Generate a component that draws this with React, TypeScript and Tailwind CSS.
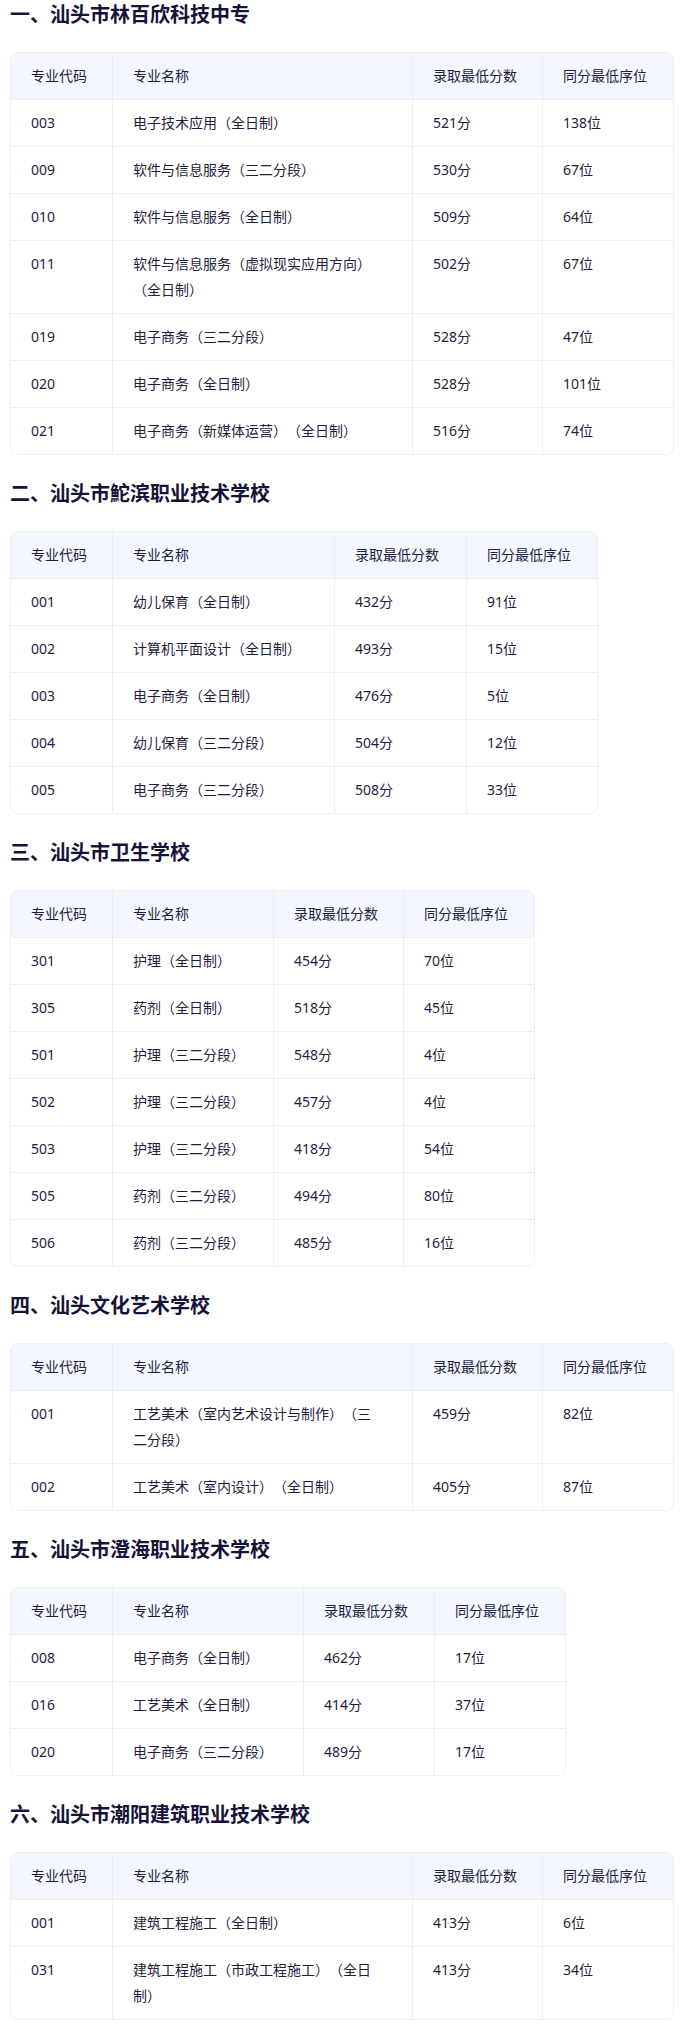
import React from "react";

type Row = [string, string, string, string];

interface Section {
  title: string;
  wrap: string;
  grid: string;
  c2: string;
  rows: Row[];
}

const HEAD: Row = ["专业代码", "专业名称", "录取最低分数", "同分最低序位"];

const sections: Section[] = [
  {
    title: "一、汕头市林百欣科技中专",
    wrap: "w-[664px]",
    grid: "grid grid-cols-[102px_300px_130px_130px]",
    c2: "pl-5 pr-[35px]",
    rows: [
      ["003", "电子技术应用（全日制）", "521分", "138位"],
      ["009", "软件与信息服务（三二分段）", "530分", "67位"],
      ["010", "软件与信息服务（全日制）", "509分", "64位"],
      ["011", "软件与信息服务（虚拟现实应用方向）（全日制）", "502分", "67位"],
      ["019", "电子商务（三二分段）", "528分", "47位"],
      ["020", "电子商务（全日制）", "528分", "101位"],
      ["021", "电子商务（新媒体运营）（全日制）", "516分", "74位"],
    ],
  },
  {
    title: "二、汕头市鮀滨职业技术学校",
    wrap: "w-[588px]",
    grid: "grid grid-cols-[102px_222px_132px_130px]",
    c2: "px-5",
    rows: [
      ["001", "幼儿保育（全日制）", "432分", "91位"],
      ["002", "计算机平面设计（全日制）", "493分", "15位"],
      ["003", "电子商务（全日制）", "476分", "5位"],
      ["004", "幼儿保育（三二分段）", "504分", "12位"],
      ["005", "电子商务（三二分段）", "508分", "33位"],
    ],
  },
  {
    title: "三、汕头市卫生学校",
    wrap: "w-[525px]",
    grid: "grid grid-cols-[102px_161px_130px_130px]",
    c2: "px-5",
    rows: [
      ["301", "护理（全日制）", "454分", "70位"],
      ["305", "药剂（全日制）", "518分", "45位"],
      ["501", "护理（三二分段）", "548分", "4位"],
      ["502", "护理（三二分段）", "457分", "4位"],
      ["503", "护理（三二分段）", "418分", "54位"],
      ["505", "药剂（三二分段）", "494分", "80位"],
      ["506", "药剂（三二分段）", "485分", "16位"],
    ],
  },
  {
    title: "四、汕头文化艺术学校",
    wrap: "w-[664px]",
    grid: "grid grid-cols-[102px_300px_130px_130px]",
    c2: "pl-5 pr-[35px]",
    rows: [
      ["001", "工艺美术（室内艺术设计与制作）（三二分段）", "459分", "82位"],
      ["002", "工艺美术（室内设计）（全日制）", "405分", "87位"],
    ],
  },
  {
    title: "五、汕头市澄海职业技术学校",
    wrap: "w-[556px]",
    grid: "grid grid-cols-[102px_191px_131px_130px]",
    c2: "px-5",
    rows: [
      ["008", "电子商务（全日制）", "462分", "17位"],
      ["016", "工艺美术（全日制）", "414分", "37位"],
      ["020", "电子商务（三二分段）", "489分", "17位"],
    ],
  },
  {
    title: "六、汕头市潮阳建筑职业技术学校",
    wrap: "w-[664px]",
    grid: "grid grid-cols-[102px_300px_130px_130px]",
    c2: "pl-5 pr-[35px]",
    rows: [
      ["001", "建筑工程施工（全日制）", "413分", "6位"],
      ["031", "建筑工程施工（市政工程施工）（全日制）", "413分", "34位"],
    ],
  },
];

function TableRow({
  row,
  grid,
  c2,
  head,
  last,
}: {
  row: Row;
  grid: string;
  c2: string;
  head?: boolean;
  last?: boolean;
}) {
  return (
    <div
      className={`${grid} ${head ? "bg-[#f4f7ff]" : "bg-white"} ${last ? "" : "border-b border-[#eceef5]"}`}
    >
      {row.map((c, i) => (
        <div
          key={i}
          className={`py-[10px] leading-[26px] text-[14px] text-[#1f1d40] ${i === 1 ? c2 : "px-5"} ${
            i < 3 ? "border-r border-[#eceef5]" : ""
          }`}
        >
          {c}
        </div>
      ))}
    </div>
  );
}

export default function App() {
  return (
    <div className="min-h-[2027px] bg-white px-[10px] font-['Noto_Sans','Noto_Sans_CJK_SC',sans-serif] [text-spacing-trim:space-all]">
      {sections.map((s, si) => (
        <section key={si} className="mb-[24px]">
          <h2 className="mb-[22px] text-[20px] leading-[30px] font-bold text-[#15133a]">{s.title}</h2>
          <div className={`${s.wrap} overflow-hidden rounded-lg border border-[#eceef5]`}>
            <TableRow row={HEAD} grid={s.grid} c2={s.c2} head />
            {s.rows.map((r, ri) => (
              <TableRow key={ri} row={r} grid={s.grid} c2={s.c2} last={ri === s.rows.length - 1} />
            ))}
          </div>
        </section>
      ))}
    </div>
  );
}
